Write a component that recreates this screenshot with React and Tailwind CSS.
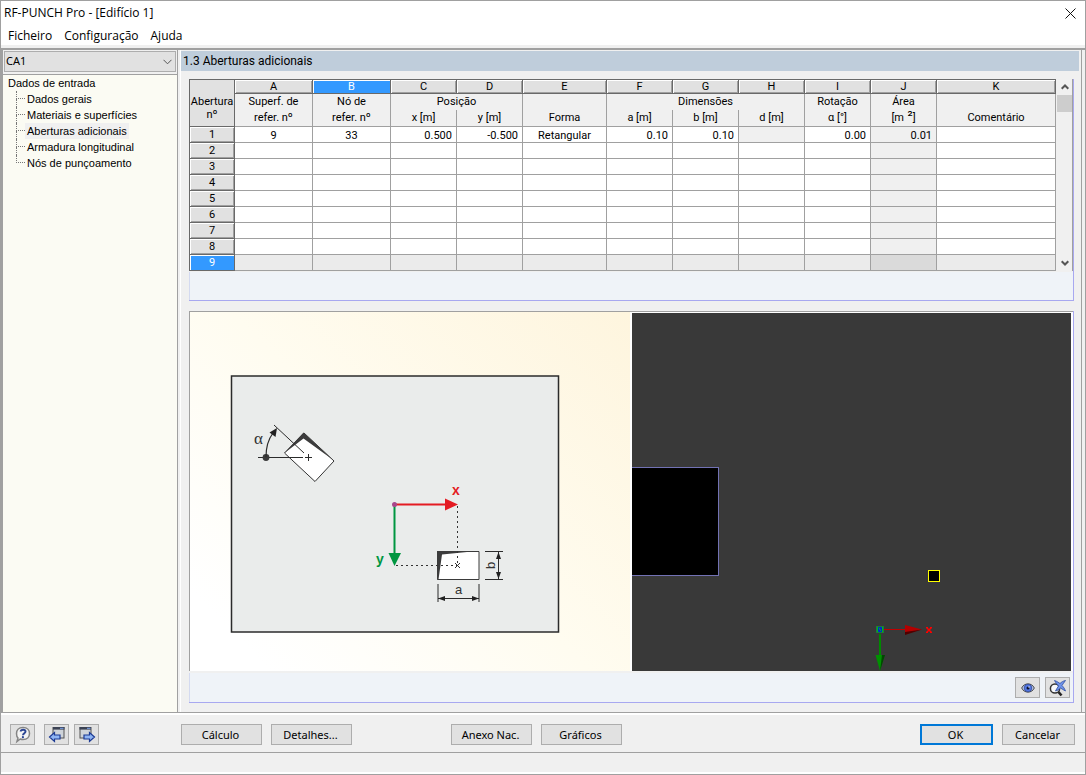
import React from "react";

const COLUMNS = [
  { id: "A", width: "w-[78px]", align: "text-center" },
  { id: "B", width: "w-[78px]", align: "text-center" },
  { id: "C", width: "w-[66px]", align: "text-right" },
  { id: "D", width: "w-[66px]", align: "text-right" },
  { id: "E", width: "w-[84px]", align: "text-center" },
  { id: "F", width: "w-[66px]", align: "text-right" },
  { id: "G", width: "w-[66px]", align: "text-right" },
  { id: "H", width: "w-[66px]", align: "text-right" },
  { id: "I", width: "w-[66px]", align: "text-right" },
  { id: "J", width: "w-[66px]", align: "text-right" },
  { id: "K", width: "", align: "text-left" },
];

const FIRST_ROW = {
  A: "9",
  B: "33",
  C: "0.500",
  D: "-0.500",
  E: "Retangular",
  F: "0.10",
  G: "0.10",
  I: "0.00",
  J: "0.01",
};

const ROWS = [1, 2, 3, 4, 5, 6, 7, 8, 9];
const SELECTED_ROW = 9;
const SELECTED_COLUMN = "B";

const TREE = [
  "Dados gerais",
  "Materiais e superfícies",
  "Aberturas adicionais",
  "Armadura longitudinal",
  "Nós de punçoamento",
];

const raised =
  "bg-[#e1e1e1] shadow-[inset_1px_1px_0_#fff,inset_-1px_-1px_0_#a0a0a0]";
const picked = "bg-[#3399ff] text-white shadow-[inset_1px_1px_0_#fff]";
const subHead = "border-b border-r border-[#a0a0a0] bg-[#f0f0f0] p-0 font-normal";

function cellColor(row, col) {
  if (row === SELECTED_ROW) return col === "J" ? "bg-[#dadada]" : "bg-[#ebebeb]";
  if (col === "J" || (row === 1 && col === "H")) return "bg-[#f0f0f0]";
  return "bg-white";
}

function OpeningsTable() {
  return (
    <table className="w-full table-fixed border-separate border-spacing-0 border-l border-t border-[#696969] font-['Roboto',sans-serif] text-[11px] leading-4 text-black">
      <colgroup>
        <col className="w-[45px]" />
        {COLUMNS.map((c) => (
          <col key={c.id} className={c.width} />
        ))}
      </colgroup>
      <thead>
        <tr className="h-[14px]">
          <th
            rowSpan={3}
            scope="col"
            className="border-b border-r border-[#696969] bg-[#e1e1e1] p-0 pb-[5px] align-bottom font-normal leading-[13px]"
          >
            Abertura
            <br />
            nº
          </th>
          {COLUMNS.map((c) => (
            <th
              key={c.id}
              className={`h-[14px] border-b border-r border-[#696969] p-0 font-normal leading-[13px] ${
                c.id === SELECTED_COLUMN ? picked : raised
              }`}
            >
              {c.id}
            </th>
          ))}
        </tr>
        <tr className="h-4">
          <th rowSpan={2} className={subHead}>
            Superf. de
            <br />
            refer. nº
          </th>
          <th rowSpan={2} className={subHead}>
            Nó de
            <br />
            refer. nº
          </th>
          <th colSpan={2} className="border-r border-[#a0a0a0] bg-[#f0f0f0] p-0 font-normal">
            Posição
          </th>
          <th rowSpan={2} className={`${subHead} align-bottom`}>
            Forma
          </th>
          <th colSpan={3} className="border-r border-[#a0a0a0] bg-[#f0f0f0] p-0 font-normal">
            Dimensões
          </th>
          <th rowSpan={2} className={subHead}>
            Rotação
            <br />α [°]
          </th>
          <th rowSpan={2} className={subHead}>
            Área
            <br />
            [m<span className="text-[14px] leading-3"> ²</span>]
          </th>
          <th rowSpan={2} className={`${subHead} align-bottom`}>
            Comentário
          </th>
        </tr>
        <tr className="h-[17px]">
          {["x [m]", "y [m]", "a [m]", "b [m]", "d [m]"].map((t) => (
            <th key={t} className={subHead}>
              {t}
            </th>
          ))}
        </tr>
      </thead>
      <tbody>
        {ROWS.map((r) => (
          <tr key={r} className="h-4">
            <th
              scope="row"
              className={`h-4 border-b border-r border-[#696969] p-0 font-normal leading-[15px] ${
                r === SELECTED_ROW ? picked : raised
              }`}
            >
              {r}
            </th>
            {COLUMNS.map((c) => (
              <td
                key={c.id}
                className={`h-4 border-b border-r border-[#a0a0a0] px-1 pb-0 pt-0.5 leading-[13px] ${c.align} ${cellColor(r, c.id)}`}
              >
                {r === 1 ? FIRST_ROW[c.id] : null}
              </td>
            ))}
          </tr>
        ))}
      </tbody>
    </table>
  );
}

function ScrollArrow({ up }) {
  return (
    <button
      type="button"
      aria-label={up ? "Subir" : "Descer"}
      className="flex h-4 w-full items-center justify-center"
    >
      <svg width="8" height="6" viewBox="0 0 8 6" fill="none" stroke="#555" strokeWidth="2">
        <path d={up ? "M0.7 4.8 4 1.5 7.3 4.8" : "M0.7 1.2 4 4.5 7.3 1.2"} />
      </svg>
    </button>
  );
}

function OpeningDiagram() {
  return (
    <svg
      className="absolute inset-0 h-full w-full"
      viewBox="190 312 440 359"
      fontFamily="'Liberation Sans', Arial, sans-serif"
      role="img"
      aria-label="Parâmetros da abertura"
    >
      <rect x="231.5" y="376" width="327" height="256" fill="#eaeceb" stroke="#2b2b2b" strokeWidth="1.5" />

      <path d="M304 433 334 461 315 481.500 284.500 453Z" fill="#fff" stroke="#333" />
      <path d="M284.500 453 303.500 432.500 332.500 459.500 303.500 438.500Z" fill="#3c3c3c" />
      <path d="M274 425 304 453M258 457.500H303M305 457.500H312M308.500 454V461" stroke="#2b2b2b" fill="none" />
      <circle cx="266" cy="457.500" r="3.400" fill="#3a3a3a" />
      <path d="M266 457C266 446 268.500 439 273 433" stroke="#2b2b2b" fill="none" strokeWidth="1.200" />
      <path d="M277 428 275.500 437 269.500 432.500Z" fill="#222" />
      <text x="254" y="444" fontSize="17" fontFamily="'Liberation Serif', serif" fill="#333">
        α
      </text>

      <path d="M437.500 551.500H479V579.500H437.500Z" fill="#fff" stroke="#3a3a3a" />
      <path d="M437 551H477L442 554.500 438.500 579.500H437Z" fill="#3c3c3c" />
      <path d="M457.500 506V565M396 565.500H457" stroke="#333" strokeDasharray="2 3" fill="none" />
      <path d="M455 563 460 568M460 563 455 568" stroke="#333" />

      <path d="M394.500 505V555" stroke="#009640" strokeWidth="2" />
      <path d="M388.500 553H401L394.500 566Z" fill="#009640" />
      <path d="M395 504.500H447" stroke="#e41b23" strokeWidth="2" />
      <path d="M445 498.500V510.500L458 504.500Z" fill="#e41b23" />
      <circle cx="394.500" cy="504.500" r="2.500" fill="#a9478b" />
      <text x="452" y="495" fontSize="14" fontWeight="700" fill="#e41b23">
        x
      </text>
      <text x="376" y="564" fontSize="14" fontWeight="700" fill="#009640">
        y
      </text>

      <path
        d="M438 584V602M479 584V602M438 598.500H479M485 551.500H503M485 579.500H503M498.500 551V580"
        stroke="#2b2b2b"
        fill="none"
      />
      <path
        d="M438 598.500 445 596V601ZM479 598.500 472 596V601ZM498.500 552 496 559H501ZM498.500 579 496 572H501Z"
        fill="#222"
      />
      <text x="455" y="594" fontSize="13" fill="#333">
        a
      </text>
      <text transform="translate(495 569) rotate(-90)" fontSize="13" fill="#333">
        b
      </text>
    </svg>
  );
}

function ModelView() {
  return (
    <svg
      className="absolute inset-0 h-full w-full"
      viewBox="632 313 439 358"
      role="img"
      aria-label="Vista do modelo"
    >
      <rect x="631.500" y="467.500" width="87" height="108" fill="#000" stroke="#7272b4" />
      <rect x="928.500" y="570.500" width="11" height="11" fill="#000" stroke="#ffff00" />
      <path d="M884 629.500H906" stroke="#c00000" />
      <path d="M905 625 922 629.500 905 634Z" fill="#b40000" />
      <path d="M905 632 922 629.500 905 635Z" fill="#500000" />
      <path d="M926.500 627.500 931.500 632.500M931.500 627.500 926.500 632.500" stroke="#ff0000" strokeWidth="1.500" />
      <path d="M926 627.500H928M930 627.500H932M926 632.500H928M930 632.500H932" stroke="#ff0000" />
      <path d="M880 634V656" stroke="#008a00" strokeWidth="2" />
      <path d="M875.500 655H884.500L880 671Z" fill="#009000" />
      <path d="M882 655H885L880 671Z" fill="#004a00" />
      <rect x="876.500" y="626.500" width="7" height="6" fill="#00b818" stroke="#1c7a3c" />
      <path d="M878.500 627.500H881.500V631.500H878.500ZM881 628 879 631" stroke="#0018e0" fill="none" />
    </svg>
  );
}

function EyeIcon() {
  return (
    <svg width="14" height="12" viewBox="0 0 14 12">
      <path d="M0.700 6C3 0.500 11 0.500 13.300 6 11 11.500 3 11.500 0.700 6Z" fill="#b9c6e6" stroke="#444" />
      <circle cx="7" cy="6" r="3.800" fill="#5578e4" stroke="#27408c" strokeWidth="0.700" />
      <circle cx="7" cy="6" r="1.500" fill="#0a1230" />
      <circle cx="8" cy="5" r="0.700" fill="#fff" />
    </svg>
  );
}

function ZoomResetIcon() {
  return (
    <svg width="18" height="18" viewBox="0 0 18 18">
      <circle cx="6" cy="9.500" r="4.600" fill="#f6f8fa" stroke="#333" strokeWidth="1.500" />
      <path d="M9.500 13 12.500 16.500" stroke="#222" strokeWidth="2.600" />
      <path d="M5.500 1.500C8.500 2.500 9.500 3.500 11 4.500 12.500 3 14 2 16.500 1.500 15 3.500 14 5 13 6.500 14.500 8 15.500 9.500 16.500 12 14.500 11 13 10 11.500 9 10 10.500 8.500 11.500 6.500 12 7.500 10 8.500 8.500 9.500 7 8 5.500 7 4 5.500 1.500Z" fill="#6e92ea" stroke="#2d4da0" strokeWidth="0.800" />
    </svg>
  );
}

function HelpIcon() {
  return (
    <svg width="18" height="18" viewBox="0 0 18 18">
      <path
        d="M9 1.500C13.300 1.500 15.500 4.200 15.500 7.500S13.300 13.500 9 13.500C8 13.500 7 13.300 6.200 13L3 15.500 4 12C2.700 10.900 2.500 9.300 2.500 7.500 2.500 4.200 4.700 1.500 9 1.500Z"
        fill="#f4f4f4"
        stroke="#858585"
        strokeWidth="1.500"
      />
      <path d="M6.700 5.500C6.900 3.300 11.500 3 11.500 5.500 11.500 7.300 9 7.200 9 9.300" fill="none" stroke="#2c4694" strokeWidth="2" />
      <circle cx="8.900" cy="11.200" r="1.100" fill="#2c4694" />
    </svg>
  );
}

function WindowArrowIcon({ left }) {
  return (
    <svg width="18" height="18" viewBox="0 0 18 18">
      <g transform={left ? undefined : "translate(18 0) scale(-1 1)"}>
        <rect x="5" y="1.500" width="11" height="10.500" fill="#cfd4da" stroke="#555" />
        <rect x="5" y="1" width="11.500" height="2.600" fill="#3b4254" />
        <path d="M1.500 11 6.500 6.500V9H12V13H6.500V15.500Z" fill="#8fb5f4" stroke="#1c3a94" strokeWidth="1.200" />
      </g>
      <path d={left ? "M12 2.300H15.500" : "M9 2.300H12.500"} stroke="#7ea6ee" />
    </svg>
  );
}

function IconButton({ label, children }) {
  return (
    <button
      type="button"
      aria-label={label}
      className="flex h-[21px] w-[25px] items-center justify-center border border-[#adadad] bg-[#e1e1e1]"
    >
      {children}
    </button>
  );
}

function PushButton({ children, className = "w-[81px] border border-[#adadad]" }) {
  return (
    <button type="button" className={`h-[21px] bg-[#e1e1e1] pr-0.5 text-center leading-[18px] ${className}`}>
      {children}
    </button>
  );
}

function Sidebar() {
  return (
    <aside className="flex w-[177px] shrink-0 flex-col border-l-2 border-r border-[#a0a0a0]">
      <div className="relative m-px mb-0.5">
        <select
          aria-label="Caso"
          className="block h-[21px] w-full appearance-none border border-[#adadad] bg-[#e1e1e1] px-px py-0"
        >
          <option>CA1</option>
        </select>
        <svg
          className="pointer-events-none absolute right-1 top-2"
          width="9"
          height="6"
          viewBox="0 0 9 6"
          fill="none"
          stroke="#555"
        >
          <path d="M0.500 0.800 4.500 4.800 8.500 0.800" />
        </svg>
      </div>
      <nav className="flex-1 border-t border-[#a0a0a0] bg-[#fbfbf3] pl-[5px] font-['Liberation_Sans',sans-serif] leading-4">
        <div>Dados de entrada</div>
        <ul className="pl-2">
          {TREE.map((item, i) => (
            <li key={item} className="flex h-4">
              <span className="flex w-[9px] flex-col">
                <span className="h-2 border-b border-l border-dotted border-[#777]" />
                {i < TREE.length - 1 && <span className="h-2 border-l border-dotted border-[#777]" />}
              </span>
              <a href="#" className={`whitespace-nowrap px-0.5 ${i === 2 ? "bg-[#f0f0f0]" : ""}`}>
                {item}
              </a>
            </li>
          ))}
        </ul>
      </nav>
    </aside>
  );
}

export default function App() {
  return (
    <div className="flex min-h-screen flex-col border border-[#a0a0a0] bg-[#f0f0f0] font-['Noto_Sans',sans-serif] text-[11px] text-black">
      <header className="bg-white font-['Open_Sans',sans-serif] text-[12px]">
        <div className="flex h-6 items-center justify-between pl-[3px] pr-[9px]">
          <h1>RF-PUNCH Pro - [Edifício 1]</h1>
          <button type="button" aria-label="Fechar">
            <svg width="11" height="11" viewBox="0 0 11 11" stroke="#111" fill="none">
              <path d="M0.500 0.500 10.500 10.500M10.500 0.500 0.500 10.500" />
            </svg>
          </button>
        </div>
        <nav className="flex h-5 items-center gap-3 pl-[7px] pt-0.5">
          <a href="#">Ficheiro</a>
          <a href="#">Configuração</a>
          <a href="#">Ajuda</a>
        </nav>
      </header>

      <div className="mt-[3px] flex flex-1 border-t-2 border-[#a0a0a0]">
        <Sidebar />
        <main className="ml-0.5 mr-[3px] flex min-w-0 flex-1 flex-col border-l border-r border-l-white border-r-[#a0a0a0] pt-px">
          <h2 className="mr-0.5 h-5 bg-[#bfcddb] px-0.5 font-['Roboto',sans-serif] text-[12px] leading-5">
            1.3 Aberturas adicionais
          </h2>
          <div className="flex flex-1 flex-col gap-2.5 pb-[9px] pl-2 pr-[7px] pt-2">
            <section className="flex flex-col border-b border-r border-[#a8a8f0]">
              <div className="flex border-r border-[#a0a0a0]">
                <div className="min-w-0 flex-1">
                  <OpeningsTable />
                </div>
                <div className="ml-px flex w-[15px] flex-col">
                  <ScrollArrow up />
                  <div className="flex-1">
                    <div className="h-[17px] bg-[#cdcdcd]" />
                  </div>
                  <ScrollArrow />
                </div>
              </div>
              <div className="mt-px h-7 border-l border-[#d4daf0] bg-[#eff3f8]" />
            </section>

            <section className="flex flex-1 flex-col border-b border-r border-[#a8a8f0]">
              <div className="grid min-h-[240px] flex-1 grid-cols-[441fr_439fr] gap-0.5 border-t border-[#a0a0a0] bg-white pr-0.5">
                <div className="relative border-l border-[#a0a0a0] bg-[linear-gradient(45deg,#ffffff_10%,#fffcf0_50%,#fef5de_100%)]">
                  <OpeningDiagram />
                </div>
                <div className="relative mt-px bg-[#393939]">
                  <ModelView />
                </div>
              </div>
              <div className="mt-0.5 flex h-[29px] items-center justify-end gap-[5px] border-l border-[#d4daf0] bg-[#eff3f8] pr-[3px]">
                <IconButton label="Mostrar">
                  <EyeIcon />
                </IconButton>
                <IconButton label="Repor zoom">
                  <ZoomResetIcon />
                </IconButton>
              </div>
            </section>
          </div>
        </main>
      </div>

      <footer className="border-t border-[#a0a0a0]">
        <div className="flex h-[39px] items-center border-t-2 border-white pl-[9px] pr-2.5 pt-0.5">
          <div className="flex w-[171px]">
            <IconButton label="Ajuda">
              <HelpIcon />
            </IconButton>
            <div className="ml-[9px] flex gap-[5px]">
              <IconButton label="Anterior">
                <WindowArrowIcon left />
              </IconButton>
              <IconButton label="Seguinte">
                <WindowArrowIcon />
              </IconButton>
            </div>
          </div>
          <div className="flex gap-[9px]">
            <PushButton>Cálculo</PushButton>
            <PushButton>Detalhes...</PushButton>
          </div>
          <div className="ml-[99px] flex gap-[9px]">
            <PushButton>Anexo Nac.</PushButton>
            <PushButton>Gráficos</PushButton>
          </div>
          <div className="ml-auto flex gap-[9px]">
            <PushButton className="w-[73px] border-2 border-[#0078d7]">OK</PushButton>
            <PushButton className="w-[73px] border border-[#adadad]">Cancelar</PushButton>
          </div>
        </div>
        <div className="h-[22px] border-b-2 border-t border-b-white border-t-[#a0a0a0]" />
      </footer>
    </div>
  );
}
